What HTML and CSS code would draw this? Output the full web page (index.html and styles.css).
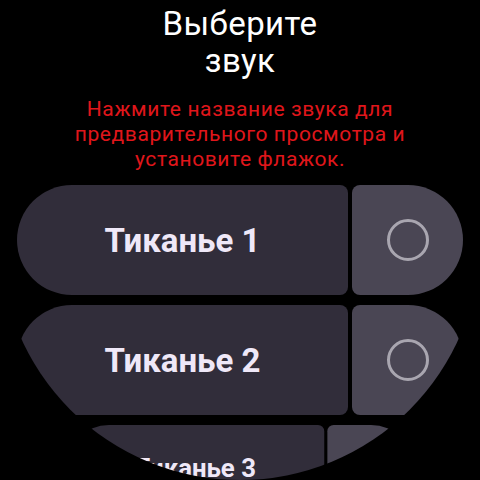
FILE: index.html
```html
<!DOCTYPE html>
<html lang="ru">
<head>
<meta charset="utf-8">
<link rel="stylesheet" href="styles.css">
</head>
<body>
<div class="watch">
  <div class="screen">
    <h1 class="title">Выберите<br>звук</h1>
    <p class="hint">Нажмите название звука для предварительного просмотра и установите флажок.</p>
    <div class="list">
      <div class="row">
        <div class="label">Тиканье 1</div>
        <div class="check"><span class="radio"></span></div>
      </div>
      <div class="row">
        <div class="label">Тиканье 2</div>
        <div class="check"><span class="radio"></span></div>
      </div>
      <div class="row row-small">
        <div class="label">Тиканье 3</div>
        <div class="check"><span class="radio"></span></div>
      </div>
    </div>
  </div>
</div>
</body>
</html>
```
FILE: styles.css
```css
html, body {
  margin: 0;
  padding: 0;
  background: #000;
}
.watch {
  width: 480px;
  height: 480px;
  border-radius: 50%;
  overflow: hidden;
  background: #000;
}
.screen {
  display: flex;
  flex-direction: column;
  align-items: center;
  font-family: Roboto, "Noto Sans", sans-serif;
}
.title {
  margin: 0;
  padding-top: 5px;
  font-size: 33px;
  font-weight: 400;
  line-height: 37px;
  letter-spacing: 0.4px;
  color: #fff;
  text-align: center;
}
.hint {
  margin: 18px 0 0;
  width: 400px;
  font-size: 21px;
  line-height: 25px;
  letter-spacing: 0.6px;
  color: #e0161b;
  text-align: center;
}
.list {
  margin-top: 13px;
  display: flex;
  flex-direction: column;
  gap: 10px;
  width: 446px;
}
.row {
  display: flex;
  gap: 4px;
  height: 110px;
  flex-shrink: 0;
}
.row-small {
  transform: scale(0.78);
  transform-origin: 50% 0;
}
.label {
  flex: 1;
  display: flex;
  align-items: center;
  justify-content: center;
  background: #312d3a;
  border-radius: 55px 8px 8px 55px;
  color: #efe8f8;
  font-size: 33px;
  font-weight: 700;
}
.check {
  width: 111px;
  display: flex;
  align-items: center;
  justify-content: flex-start;
  padding-left: 35px;
  box-sizing: border-box;
  background: #4a4654;
  border-radius: 8px 55px 55px 8px;
}
.radio {
  width: 42px;
  height: 42px;
  border: 3px solid #a9a6b0;
  border-radius: 50%;
  box-sizing: border-box;
}
```
